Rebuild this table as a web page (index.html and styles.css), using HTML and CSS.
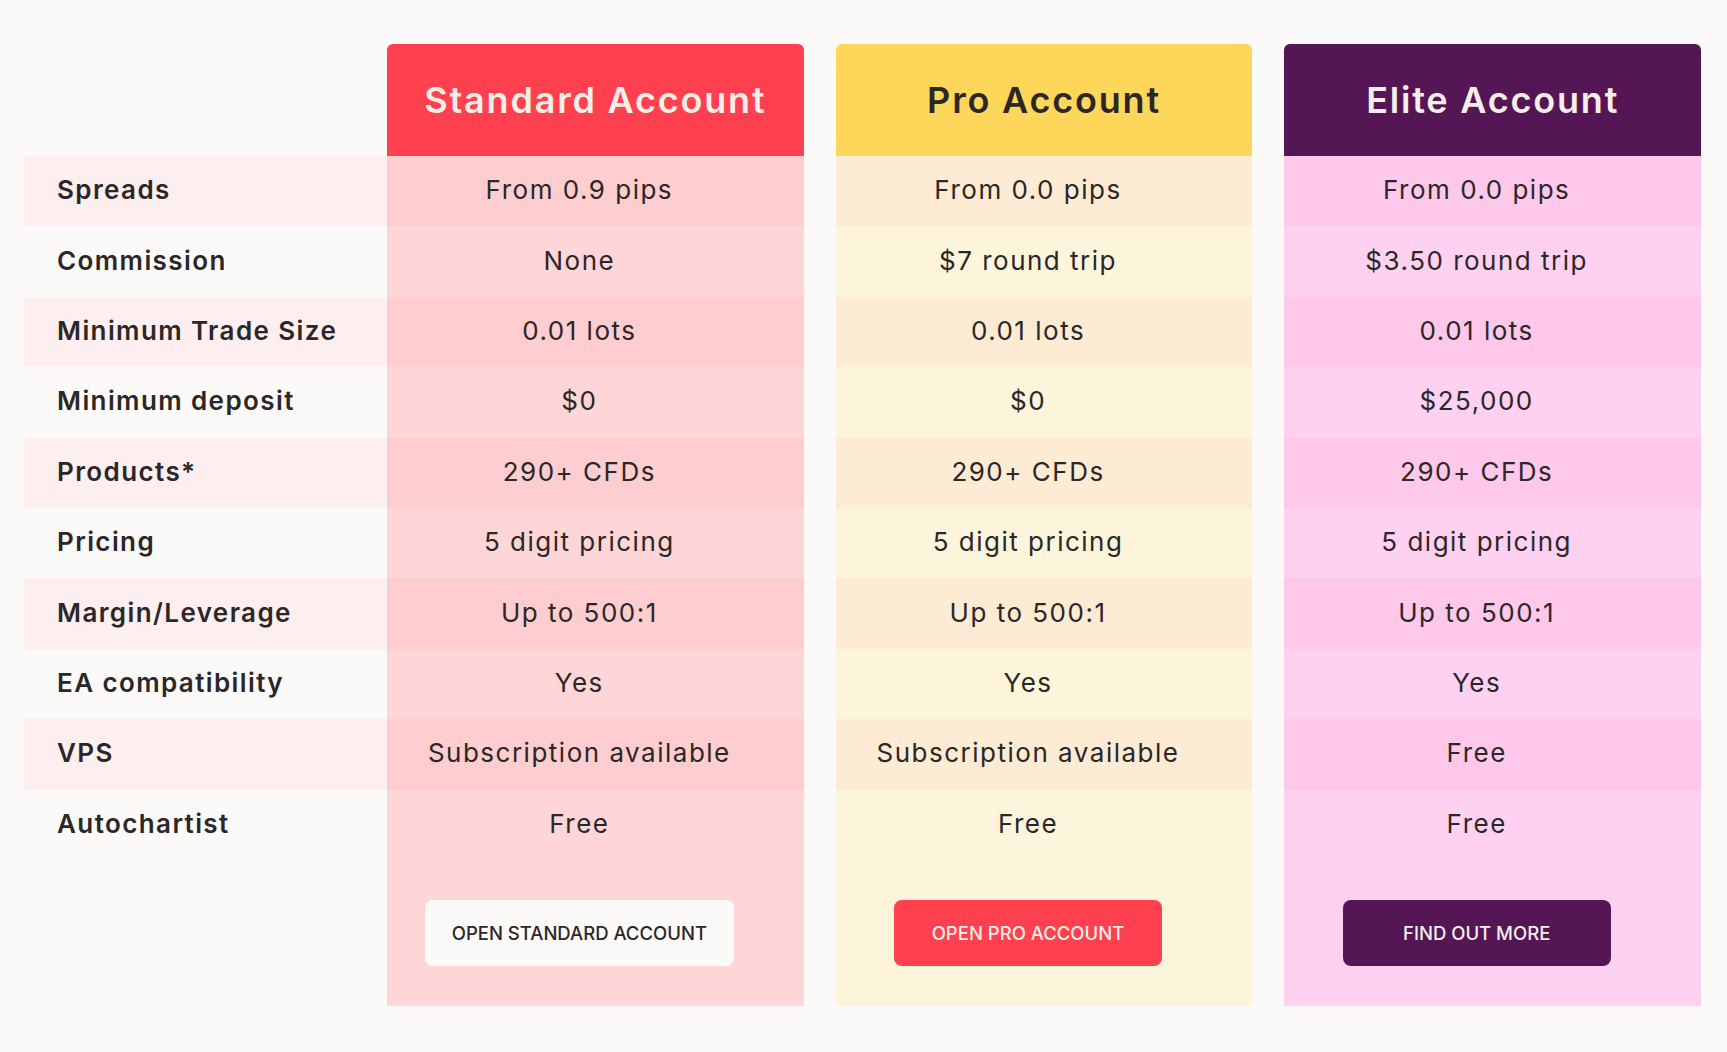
FILE: index.html
```html
<!DOCTYPE html>
<html lang="en">
<head>
<meta charset="utf-8">
<title>Account comparison</title>
<link rel="stylesheet" href="styles.css">
</head>
<body>
<main class="compare">
  <div class="labels">
    <div class="labels-head"></div>
    <div class="label odd">Spreads</div>
    <div class="label">Commission</div>
    <div class="label odd">Minimum Trade Size</div>
    <div class="label">Minimum deposit</div>
    <div class="label odd">Products*</div>
    <div class="label">Pricing</div>
    <div class="label odd">Margin/Leverage</div>
    <div class="label">EA compatibility</div>
    <div class="label odd">VPS</div>
    <div class="label">Autochartist</div>
  </div>
  <div class="plans">
    <section class="plan plan-standard">
      <h2 class="plan-head">Standard Account</h2>
      <div class="cell odd">From 0.9 pips</div>
      <div class="cell">None</div>
      <div class="cell odd">0.01 lots</div>
      <div class="cell">$0</div>
      <div class="cell odd">290+ CFDs</div>
      <div class="cell">5 digit pricing</div>
      <div class="cell odd">Up to 500:1</div>
      <div class="cell">Yes</div>
      <div class="cell odd">Subscription available</div>
      <div class="cell">Free</div>
      <div class="cta"><a class="btn btn-light" href="#">OPEN STANDARD ACCOUNT</a></div>
    </section>
    <section class="plan plan-pro">
      <h2 class="plan-head">Pro Account</h2>
      <div class="cell odd">From 0.0 pips</div>
      <div class="cell">$7 round trip</div>
      <div class="cell odd">0.01 lots</div>
      <div class="cell">$0</div>
      <div class="cell odd">290+ CFDs</div>
      <div class="cell">5 digit pricing</div>
      <div class="cell odd">Up to 500:1</div>
      <div class="cell">Yes</div>
      <div class="cell odd">Subscription available</div>
      <div class="cell">Free</div>
      <div class="cta"><a class="btn btn-red" href="#">OPEN PRO ACCOUNT</a></div>
    </section>
    <section class="plan plan-elite">
      <h2 class="plan-head">Elite Account</h2>
      <div class="cell odd">From 0.0 pips</div>
      <div class="cell">$3.50 round trip</div>
      <div class="cell odd">0.01 lots</div>
      <div class="cell">$25,000</div>
      <div class="cell odd">290+ CFDs</div>
      <div class="cell">5 digit pricing</div>
      <div class="cell odd">Up to 500:1</div>
      <div class="cell">Yes</div>
      <div class="cell odd">Free</div>
      <div class="cell">Free</div>
      <div class="cta"><a class="btn btn-purple" href="#">FIND OUT MORE</a></div>
    </section>
  </div>
</main>
</body>
</html>
```

FILE: styles.css
```css
* { box-sizing: border-box; }

html, body {
  margin: 0;
  padding: 0;
  background: #fcfaf8;
}

body {
  font-family: Inter, Lato, "Liberation Sans", sans-serif;
  color: #2b2727;
}

.compare {
  display: flex;
  align-items: flex-start;
  padding: 44px 26px 0 24px;
}

.labels {
  width: 363px;
  flex: none;
  display: flex;
  flex-direction: column;
}

.labels-head {
  height: 112px;
}

.label {
  height: 70.4px;
  display: flex;
  align-items: center;
  padding-left: 33px;
  padding-bottom: 3px;
  font-size: 26px;
  font-weight: 600;
  letter-spacing: 1.4px;
  color: #2b2727;
}

.label.odd { background: #fdefef; }

.plans {
  flex: 1;
  display: flex;
  gap: 32px;
}

.plan {
  flex: 1;
  display: flex;
  flex-direction: column;
  border-radius: 6px 6px 0 0;
  overflow: hidden;
}

.plan-head {
  margin: 0;
  height: 112px;
  display: flex;
  align-items: center;
  justify-content: center;
  font-size: 36px;
  font-weight: 600;
  letter-spacing: 1.8px;
  color: #f7efe7;
}

.cell {
  height: 70.4px;
  display: flex;
  align-items: center;
  justify-content: center;
  padding-right: 32px;
  padding-bottom: 3px;
  font-size: 26px;
  font-weight: 400;
  letter-spacing: 1.5px;
  color: #2b2727;
}

.cta {
  display: flex;
  justify-content: center;
  padding: 40px 32px 40px 0;
}

.btn {
  display: inline-flex;
  align-items: center;
  justify-content: center;
  height: 66px;
  min-width: 268px;
  padding: 0 27px;
  border-radius: 8px;
  font-size: 18.5px;
  font-weight: 500;
  text-decoration: none;
}

.btn-light { background: #fcfaf8; color: #2b2727; }
.btn-red { background: #fe404f; color: #f7efe7; }
.btn-purple { background: #551656; color: #f7efe7; }

.plan-standard { background: #fed6d8; }
.plan-standard .plan-head { background: #fe404f; }
.plan-standard .cell.odd { background: #fdcdd0; }

.plan-pro { background: #fdf4dc; }
.plan-pro .plan-head { background: #fed65a; color: #2b2727; }
.plan-pro .cell.odd { background: #fdebd4; }

.plan-elite { background: #fed1f1; }
.plan-elite .plan-head { background: #551656; }
.plan-elite .cell.odd { background: #fec8eb; }
```
